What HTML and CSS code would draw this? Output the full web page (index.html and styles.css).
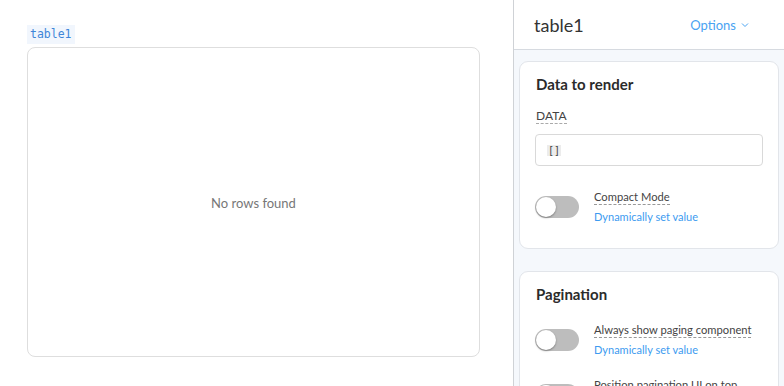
FILE: index.html
```html
<!DOCTYPE html>
<html lang="en">
<head>
    <meta charset="UTF-8">
    <meta name="viewport" content="width=device-width, initial-scale=1.0">
    <title>table1</title>
    <link rel="stylesheet" href="styles.css">
</head>
<body>
    <!-- Canvas -->
    <div class="canvas">
        <div class="widget-label">table1</div>
        <div class="table-box">
            <span class="empty">No rows found</span>
        </div>
    </div>

    <!-- Inspector -->
    <div class="inspector">
        <div class="inspector-header">
            <span class="widget-name">table1</span>
            <span class="options">Options
                <svg width="8" height="6" viewBox="0 0 8 6"><path d="M1 1.5 L4 4.5 L7 1.5" fill="none" stroke="currentColor" stroke-width="1"/></svg>
            </span>
        </div>

        <div class="inspector-body">
            <div class="card">
                <div class="card-title">Data to render</div>
                <div class="field-label">DATA</div>
                <div class="code-input"><span class="code">[]</span></div>
                <div class="toggle-row">
                    <div class="toggle"><div class="knob"></div></div>
                    <div class="toggle-text">
                        <span class="toggle-label">Compact Mode</span>
                        <span class="dynamic">Dynamically set value</span>
                    </div>
                </div>
            </div>

            <div class="card">
                <div class="card-title">Pagination</div>
                <div class="toggle-row">
                    <div class="toggle"><div class="knob"></div></div>
                    <div class="toggle-text">
                        <span class="toggle-label">Always show paging component</span>
                        <span class="dynamic">Dynamically set value</span>
                    </div>
                </div>
                <div class="toggle-row">
                    <div class="toggle"><div class="knob"></div></div>
                    <div class="toggle-text">
                        <span class="toggle-label">Position pagination UI on top</span>
                        <span class="dynamic">Dynamically set value</span>
                    </div>
                </div>
            </div>
        </div>
    </div>
</body>
</html>
```

FILE: styles.css
```css
body {
    font-family: 'Lato', 'Noto Sans', sans-serif;
    background-color: #fff;
    color: #333;
    margin: 0;
    padding: 0;
    display: flex;
    height: 386px;
    overflow: hidden;
}

/* Canvas */
.canvas {
    width: 513px;
    flex-shrink: 0;
    padding: 25px 33px 0 27px;
    box-sizing: border-box;
    display: flex;
    flex-direction: column;
    align-items: flex-start;
}

.widget-label {
    font-family: 'DejaVu Sans Mono', monospace;
    font-size: 11.5px;
    line-height: 19px;
    height: 19px;
    padding: 0 3px;
    color: #3f86d8;
    background-color: #f1f6fd;
    margin-bottom: 3px;
}

.table-box {
    width: 100%;
    height: 310px;
    box-sizing: border-box;
    border: 1px solid #dedede;
    border-radius: 8px;
    display: flex;
    align-items: center;
    justify-content: center;
}

.empty {
    font-size: 13px;
    color: #777;
    margin-top: 2px;
}

/* Inspector */
.inspector {
    flex: 1;
    border-left: 1px solid #cfd2d6;
    background-color: #f5f8fc;
    display: flex;
    flex-direction: column;
    overflow: hidden;
}

.inspector-header {
    height: 50px;
    flex-shrink: 0;
    box-sizing: border-box;
    background-color: #fff;
    border-bottom: 1px solid #d6dae0;
    display: flex;
    align-items: center;
    justify-content: space-between;
    padding: 0 35px 0 20px;
}

.widget-name {
    font-size: 18px;
    color: #333;
}

.options {
    font-size: 13px;
    color: #4aa3f2;
    display: flex;
    align-items: center;
    gap: 5px;
}

.inspector-body {
    padding: 11px 5px 0 5px;
    display: flex;
    flex-direction: column;
    gap: 22px;
}

.card {
    flex-shrink: 0;
    background-color: #fff;
    border: 1px solid #e2e5ea;
    border-radius: 9px;
    padding: 12px 15px 25px 15px;
}

.card-title {
    font-size: 15px;
    font-weight: bold;
    color: #2b2b2b;
    line-height: 20px;
    margin-left: 1px;
}

.field-label {
    display: inline-block;
    font-size: 12px;
    color: #444;
    margin-top: 15px;
    margin-left: 1px;
    line-height: 14px;
    border-bottom: 1px dashed #aaa;
}

.code-input {
    margin-top: 10px;
    height: 32px;
    box-sizing: border-box;
    border: 1px solid #d9d9d9;
    border-radius: 4px;
    display: flex;
    align-items: center;
    padding-left: 11px;
}

.code {
    font-family: 'DejaVu Sans Mono', monospace;
    font-size: 10px;
    color: #444;
    background-color: #ececec;
    padding: 0 1px;
}

.toggle-row {
    display: flex;
    align-items: flex-start;
    gap: 15px;
    margin-top: 24px;
}

.card-title + .toggle-row {
    margin-top: 19px;
}

.toggle-row + .toggle-row {
    margin-top: 22px;
}

.toggle {
    width: 44px;
    height: 22px;
    border-radius: 11px;
    background-color: #bdbdbd;
    position: relative;
    margin-top: 6px;
    flex-shrink: 0;
}

.knob {
    position: absolute;
    top: 1px;
    left: 1px;
    width: 20px;
    height: 20px;
    border-radius: 50%;
    background-color: #fff;
    box-shadow: 0 1px 2px rgba(0, 0, 0, 0.35);
}

.toggle-text {
    display: flex;
    flex-direction: column;
    align-items: flex-start;
}

.toggle-label {
    font-size: 11.2px;
    color: #444;
    line-height: 14px;
    border-bottom: 1px dashed #999;
}

.dynamic {
    font-size: 11px;
    color: #3d9bf0;
    margin-top: 5px;
    line-height: 13px;
}
```
